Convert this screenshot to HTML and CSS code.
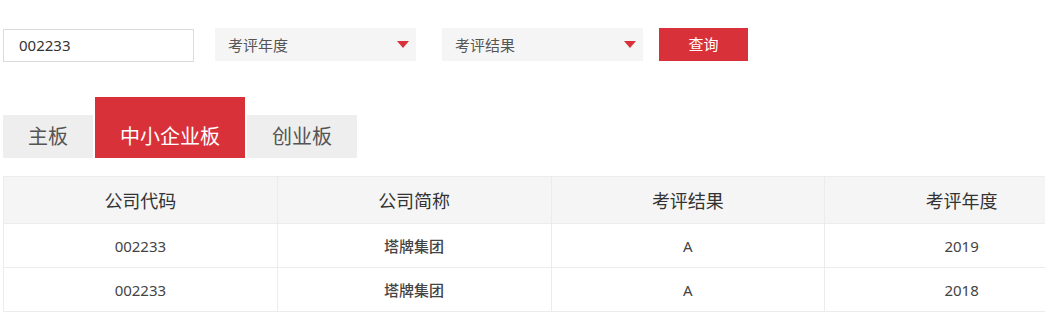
FILE: index.html
```html
<!DOCTYPE html>
<html lang="zh-CN">
<head>
<meta charset="utf-8">
<title>考评结果查询</title>
<link rel="stylesheet" href="styles.css">
</head>
<body>
<div class="page">
  <div class="filters">
    <div class="code-input">002233</div>
    <div class="select sel-year"><span>考评年度</span><i class="arrow"></i></div>
    <div class="select sel-result"><span>考评结果</span><i class="arrow"></i></div>
    <div class="btn">查询</div>
  </div>
  <div class="tabs">
    <div class="tab">主板</div>
    <div class="tab active">中小企业板</div>
    <div class="tab">创业板</div>
  </div>
  <div class="grid-wrap">
    <table class="grid">
      <thead>
        <tr><th>公司代码</th><th>公司简称</th><th>考评结果</th><th>考评年度</th></tr>
      </thead>
      <tbody>
        <tr><td>002233</td><td class="name">塔牌集团</td><td>A</td><td>2019</td></tr>
        <tr><td>002233</td><td class="name">塔牌集团</td><td>A</td><td>2018</td></tr>
      </tbody>
    </table>
  </div>
</div>
</body>
</html>
```
FILE: styles.css
```css
html, body {
  margin: 0;
  padding: 0;
  background: #fff;
  overflow: hidden;
}
body {
  font-family: "Noto Sans", "Noto Sans CJK SC", sans-serif;
  color: #333;
}
.page {
  padding: 28px 0 0 3px;
}
.filters {
  display: flex;
  align-items: flex-start;
  height: 33px;
}
.code-input {
  box-sizing: border-box;
  width: 191px;
  height: 33px;
  margin-top: 1px;
  border: 1px solid #dcdcdc;
  padding-left: 15px;
  font-size: 15px;
  line-height: 30px;
  color: #333;
}
.select {
  box-sizing: border-box;
  height: 33px;
  background: #f5f5f5;
  display: flex;
  align-items: center;
  justify-content: space-between;
  padding: 0 7px 0 13px;
  font-size: 15px;
  color: #555;
}
.sel-year {
  width: 201px;
  margin-left: 21px;
}
.sel-result {
  width: 201px;
  margin-left: 26px;
}
.arrow {
  width: 0;
  height: 0;
  border-left: 6px solid transparent;
  border-right: 6px solid transparent;
  border-top: 7px solid #d9313a;
}
.btn {
  box-sizing: border-box;
  width: 89px;
  height: 33px;
  margin-left: 16px;
  background: #d9313a;
  color: #fff;
  font-size: 15px;
  line-height: 33px;
  text-align: center;
}
.tabs {
  display: flex;
  align-items: flex-end;
  margin-top: 36px;
  gap: 2px;
}
.tab {
  box-sizing: border-box;
  height: 43px;
  line-height: 43px;
  padding: 0 25px;
  background: #eeeeee;
  color: #555;
  font-size: 20px;
}
.tab.active {
  height: 61px;
  padding-top: 18px;
  background: #d9313a;
  color: #fff;
}
.grid-wrap {
  margin-top: 18px;
  overflow: hidden;
}
.grid {
  width: 1096px;
  border-collapse: collapse;
  table-layout: fixed;
}
.grid th, .grid td {
  border: 1px solid #ececec;
  text-align: center;
  padding: 0;
}
.grid th {
  height: 46px;
  background: #f5f5f5;
  font-size: 18px;
  font-weight: normal;
  color: #333;
}
.grid td {
  height: 43px;
  font-size: 15px;
  color: #444;
}
.grid td.name {
  font-weight: 500;
}
```
